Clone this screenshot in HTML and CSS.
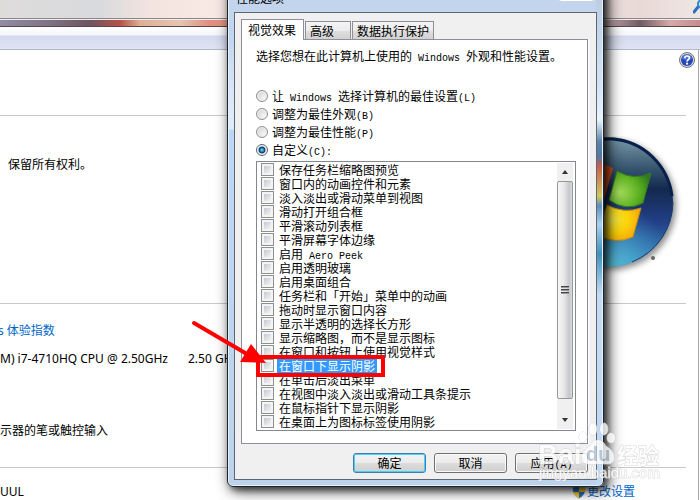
FILE: index.html
```html
<!DOCTYPE html>
<html lang="zh-CN">
<head>
    <meta charset="UTF-8">
    <meta name="viewport" content="width=device-width, initial-scale=1.0">
    <title>性能选项</title>
    <link rel="stylesheet" href="styles.css">
</head>
<body>
    <div class="system">
        <div class="glass">
            <svg class="search" width="8" height="14" viewBox="0 0 8 14">
                <path d="M1 12 L5 7" stroke="#2f6fc0" stroke-width="3" stroke-linecap="round"/>
                <circle cx="9" cy="4" r="4" fill="#d7ecfb" stroke="#2f86d0" stroke-width="2"/>
            </svg>
        </div>
        <div class="strip"></div>
        <div class="toolbar"></div>
        <div class="content">
            <div class="section head">
                <a class="help" href="#" aria-label="帮助">
                    <svg width="16" height="16" viewBox="0 0 16 16">
                        <circle cx="8" cy="8" r="7.5" fill="#d8d8dc" stroke="#77777c"/>
                        <circle cx="8" cy="8" r="6" fill="#2348b8"/>
                        <path d="M3 7a5 5 0 0 1 10 0q-5 2-10 0z" fill="#6d8be0" opacity=".6"/>
                        <path d="M5.8 6.2q0-2.2 2.3-2.2t2.3 2q0 1-1.2 1.8T8.1 9.6" fill="none" stroke="#fff" stroke-width="1.7"/>
                        <circle cx="8.1" cy="11.7" r="1.1" fill="#fff"/>
                    </svg>
                </a>
            </div>
            <div class="section edition">
                <p class="copyright">保留所有权利。</p>
                <svg class="logo" width="144" height="144" viewBox="0 0 144 144">
                    <defs>
                        <linearGradient id="ball" x1="0" y1="0" x2="0" y2="1">
                            <stop offset="0" stop-color="#7b9aa9"/>
                            <stop offset=".25" stop-color="#33536d"/>
                            <stop offset=".4" stop-color="#14284e"/>
                            <stop offset=".65" stop-color="#223f87"/>
                            <stop offset="1" stop-color="#3c8fc0"/>
                        </linearGradient>
                        <radialGradient id="glow" cx=".5" cy="1" r=".5">
                            <stop offset="0" stop-color="#5cc4dc"/>
                            <stop offset="1" stop-color="#3fa0d0" stop-opacity="0"/>
                        </radialGradient>
                        <radialGradient id="green" cx=".25" cy=".6" r=".8">
                            <stop offset="0" stop-color="#a4dc5c"/>
                            <stop offset=".6" stop-color="#5cb020"/>
                            <stop offset="1" stop-color="#2c7a1c"/>
                        </radialGradient>
                        <radialGradient id="yellow" cx=".3" cy=".4" r=".8">
                            <stop offset="0" stop-color="#f8ee4c"/>
                            <stop offset=".5" stop-color="#fbd408"/>
                            <stop offset="1" stop-color="#f49a10"/>
                        </radialGradient>
                        <filter id="soft" x="-20%" y="-20%" width="140%" height="140%">
                            <feGaussianBlur stdDeviation="3"/>
                        </filter>
                    </defs>
                    <circle cx="69" cy="69" r="65" fill="#000" opacity=".45" filter="url(#soft)"/>
                    <circle cx="66" cy="66" r="65" fill="url(#ball)"/>
                    <circle cx="66" cy="66" r="65" fill="url(#glow)"/>
                    <path d="M3 50 A65 65 0 0 1 130 60" fill="none" stroke="#08204a" stroke-width="3"/>
                    <path d="M131 66 A65 65 0 0 1 90 126" fill="none" stroke="#1b3d77" stroke-width="1"/>
                    <path d="M30 36 Q50 22 71 32 L62 64 Q42 54 22 64 Z" fill="#d4501c"/>
                    <path d="M75 35 Q92 45 109 37 L101 67 Q84 76 67 64 Z" fill="url(#green)" stroke="#397c20"/>
                    <path d="M20 68 Q40 58 60 69 L53 100 Q33 90 13 98 Z" fill="#3f88cc"/>
                    <path d="M65 69 Q82 78 99 72 L91 101 Q74 109 55 99 Z" fill="url(#yellow)" stroke="#b88b14"/>
                    <circle cx="111" cy="122" r="2" fill="#666"/>
                </svg>
            </div>
            <div class="section specs">
                <a class="rating" href="#">s 体验指数</a>
                <p class="cpu"><span>M) i7-4710HQ CPU @ 2.50GHz</span><span>2.50 GHz</span></p>
                <p class="pen">示器的笔或触控输入</p>
            </div>
            <div class="section names">
                <p>UUL</p>
                <a class="change" href="#">
                    <svg width="14" height="14" viewBox="0 0 14 14">
                        <path d="M7 0q3 2 7 1.5q0 9-7 12.5q-7-3.5-7-12.5q4 .5 7-1.5z" fill="#c9ced6"/>
                        <path d="M7 1.5v5.5H1.3q-.3-2-.3-4.5q3.500 0 6-1z" fill="#2d6fc4"/>
                        <path d="M7 1.5v5.5h5.700q.3-2 .3-4.500q-3.500 0-6-1z" fill="#f6d02c"/>
                        <path d="M7 7v6q-4.500-2-5.700-6z" fill="#f6d02c"/>
                        <path d="M7 7v6q4.500-2 5.700-6z" fill="#2d6fc4"/>
                    </svg>更改设置</a>
            </div>
        </div>
    </div>

    <div class="dialog">
        <div class="titlebar">
            <span>性能选项</span>
            <button class="close" type="button" aria-label="关闭"></button>
        </div>
        <form class="client">
            <div class="tabs">
                <button class="tab active" type="button">视觉效果</button>
                <button class="tab" type="button">高级</button>
                <button class="tab" type="button">数据执行保护</button>
            </div>
            <div class="pane">
                <p class="intro">选择您想在此计算机上使用的<span class="en"> Windows </span>外观和性能设置。</p>
                <div class="radios">
                    <label><input type="radio" name="fx"><span>让<span class="en"> Windows </span>选择计算机的最佳设置<span class="en">(L)</span></span></label>
                    <label><input type="radio" name="fx"><span>调整为最佳外观<span class="en">(B)</span></span></label>
                    <label><input type="radio" name="fx"><span>调整为最佳性能<span class="en">(P)</span></span></label>
                    <label><input type="radio" name="fx" checked><span>自定义<span class="en">(C):</span></span></label>
                </div>
                <div class="listbox">
                    <div class="options">
                        <label><input type="checkbox"><span>保存任务栏缩略图预览</span></label>
                        <label><input type="checkbox"><span>窗口内的动画控件和元素</span></label>
                        <label><input type="checkbox"><span>淡入淡出或滑动菜单到视图</span></label>
                        <label><input type="checkbox"><span>滑动打开组合框</span></label>
                        <label><input type="checkbox"><span>平滑滚动列表框</span></label>
                        <label><input type="checkbox"><span>平滑屏幕字体边缘</span></label>
                        <label><input type="checkbox"><span>启用<span class="en"> Aero Peek</span></span></label>
                        <label><input type="checkbox"><span>启用透明玻璃</span></label>
                        <label><input type="checkbox"><span>启用桌面组合</span></label>
                        <label><input type="checkbox"><span>任务栏和「开始」菜单中的动画</span></label>
                        <label><input type="checkbox"><span>拖动时显示窗口内容</span></label>
                        <label><input type="checkbox"><span>显示半透明的选择长方形</span></label>
                        <label><input type="checkbox"><span>显示缩略图，而不是显示图标</span></label>
                        <label><input type="checkbox"><span>在窗口和按钮上使用视觉样式</span></label>
                        <label class="selected"><input type="checkbox"><span>在窗口下显示阴影</span></label>
                        <label><input type="checkbox"><span>在单击后淡出菜单</span></label>
                        <label><input type="checkbox"><span>在视图中淡入淡出或滑动工具条提示</span></label>
                        <label><input type="checkbox"><span>在鼠标指针下显示阴影</span></label>
                        <label><input type="checkbox"><span>在桌面上为图标标签使用阴影</span></label>
                    </div>
                    <div class="scrollbar">
                        <div class="arrow up"></div>
                        <div class="thumb"><i></i><i></i><i></i></div>
                        <div class="arrow down"></div>
                    </div>
                </div>
            </div>
            <div class="buttons">
                <button class="btn default" type="button">确定</button>
                <button class="btn" type="button">取消</button>
                <button class="btn" type="button">应用<span class="en">(A)</span></button>
            </div>
        </form>
    </div>

    <svg class="pointer" width="200" height="64" viewBox="0 0 200 64">
        <path d="M4 5 L62 39" stroke="#f00" stroke-width="4" stroke-linecap="round"/>
        <path d="M61 26 L50 44 L76 45 Z" fill="#f00"/>
        <rect x="68" y="39" width="125" height="18" fill="none" stroke="#f00" stroke-width="4"/>
    </svg>

    <svg class="watermark" width="134" height="64" viewBox="0 0 134 64">
        <g class="mark">
            <ellipse cx="52" cy="17" rx="4" ry="5"/>
            <ellipse cx="62" cy="9" rx="4" ry="6"/>
            <ellipse cx="73" cy="9" rx="4" ry="6"/>
            <ellipse cx="80" cy="18" rx="4" ry="5"/>
            <path d="M67 20q5 0 8 6q8 5 8 12q0 6-7 6H58q-7 0-7-6q0-7 8-12q3-6 8-6z"/>
            <text x="7" y="44" font-size="28">Bai</text>
            <text x="86" y="43" font-size="21">经验</text>
            <text class="site" x="8" y="58" font-size="15">jingyan.baidu.com</text>
        </g>
        <text class="du" x="55" y="41" font-size="20">du</text>
    </svg>
</body>
</html>
```
FILE: styles.css
```css
*{
    box-sizing: border-box;
}

body{
    margin: 0;
    height: 100vh;
    overflow: hidden;
    position: relative;
    background-color: #fff;
    color: #000;
    font: 12px/16px "Noto Sans", "Noto Sans CJK SC", sans-serif;
}

p{
    margin: 0;
}

a{
    color: #0066cc;
    text-decoration: none;
}

/* 后面的系统窗口 */
.system{
    height: 100%;
    display: flex;
    flex-direction: column;
}

.glass{
    flex: none;
    height: 19px;
    display: flex;
    justify-content: flex-end;
    border-bottom: 1px solid #8d8587;
    background: linear-gradient(90deg, #dedcdb 0, #d9dade 100px, #f3e4df 150px, #f9eae5 228px, #eadfdd 600px, #e9d9d6 640px, #efe6e4 100%);
}

.search{
    margin-right: -1px;
}

.strip{
    flex: none;
    height: 8px;
    border-top: 1px solid #eee;
    border-bottom: 1px solid #5c4448;
    background: linear-gradient(90deg, #918da6 0, #7d7384 50px, #6e5561 90px, #b65347 120px, #ddb094 140px, #e5c5b2 180px, #df8e80 210px, #e59884 228px, #cdb0b2 604px, #6f5b65 640px, #d6a9a9 670px, #c68d90 100%);
}

.toolbar{
    flex: none;
    height: 23px;
    border-bottom: 1px solid #b4b9c9;
    background: linear-gradient(#fff, #f3f5fb 8px, #d4d9ed 9px, #dfe4f4);
}

.content{
    flex: 1;
    margin-right: 1px;
    border-right: 1px solid #a5a5a5;
}

.section{
    margin-right: 12px;
    border-bottom: 1px solid #c9c9c9;
}

.head{
    height: 66px;
    display: flex;
    justify-content: flex-end;
    padding-top: 2px;
}

.help{
    margin-right: -9px;
}

.edition{
    height: 188px;
    display: flex;
    justify-content: space-between;
}

.copyright{
    padding: 41px 0 0 8px;
}

.logo{
    margin-top: 20px;
}

.specs{
    height: 164px;
    padding-top: 19px;
}

.rating{
    display: block;
    margin-left: -2px;
}

.cpu{
    display: flex;
    gap: 20px;
    padding-top: 12px;
}

.pen{
    padding-top: 56px;
}

.names{
    display: flex;
    justify-content: space-between;
    border: none;
    padding: 16px 51px 0 0;
}

.change{
    display: flex;
    align-items: center;
    gap: 1px;
}

/* 性能选项对话框 */
.dialog{
    position: absolute;
    left: 227px;
    top: -17px;
    width: 377px;
    padding: 0 6px 6px;
    border: 1px solid #20252c;
    border-radius: 6px;
    box-shadow: 3px 3px 6px rgba(0, 0, 0, .5), 4px 3px 15px rgba(0, 0, 0, .8), inset 0 0 0 1px #e3f0fd;
    background:
        linear-gradient(#b9c9df, #d2e3f5 100px, #e9f3fc 136px, #5b82a9 158px, #4f79a4 172px, #c85c50 182px, #d0c85c 212px, #5c8fc0 222px, #a9d0ec 240px, #3d92c0 270px, #c4daf2 310px, #bed8f4) right / 7px 100% no-repeat,
        linear-gradient(#c5d5ec, #bfd5ee 50px, #d9e8f8 110px, #dfedfb 145px, #bcd7f4 146px, #bdd3ec 100%);
    font-family: "Noto Sans CJK SC", sans-serif;
}

.titlebar{
    height: 28px;
    display: flex;
    justify-content: space-between;
    padding-left: 2px;
    line-height: 28px;
}

.close{
    width: 39px;
    height: 17px;
    margin-right: 1px;
    padding: 0;
    border: 1px solid #fff;
    border-radius: 0 0 4px 4px;
    background-color: #c76352;
}

.client{
    border: 1px solid #5f6672;
    background-color: #f0f0f0;
    padding: 6px 8px 6px 6px;
}

.tabs{
    display: flex;
    align-items: flex-end;
    gap: 1px;
}

.tab{
    height: 18px;
    padding: 0 4px;
    border: 1px solid #8e8f98;
    border-bottom: none;
    background: linear-gradient(#f4f4f4, #ececec 50%, #dedede 51%, #d2d2d2);
    font: inherit;
    text-align: left;
    line-height: 18px;
    color: #000;
}

.tab:nth-child(2){
    width: 46px;
}

.tab.active{
    position: relative;
    height: 21px;
    width: 63px;
    padding: 0 6px;
    margin-bottom: -1px;
    background: #fff;
}

.pane{
    border: 1px solid #8e8f98;
    background-color: #fff;
    padding: 8px 11px 12px 14px;
    box-shadow: 2px 0 0 #f9f9f9;
}

.en{
    font-family: "Liberation Mono", monospace;
    font-size: 10px;
    line-height: 1;
    white-space: pre;
}

.radios{
    padding: 23px 0 2px;
}

.radios label{
    display: flex;
    align-items: center;
    height: 18px;
}

input{
    appearance: none;
    flex: none;
    width: 13px;
    height: 13px;
    margin: 0;
}

input[type="radio"]{
    width: 12px;
    height: 12px;
    margin-right: 4px;
    border: 1px solid #8e8f8f;
    border-radius: 50%;
    background: radial-gradient(circle at 7px 7px, #f6f6f6, #c9ccd1);
    box-shadow: inset 0 0 0 1px #f4f4f4;
}

input[type="radio"]:checked{
    border-color: #55677c;
    background: radial-gradient(circle at 5px 5px, #8fe0fa 0, #1a78ac 2px, #0b3558 3px, #eef2f5 4px);
}

.listbox{
    display: flex;
    justify-content: space-between;
    border: 1px solid #828790;
    padding: 1px 2px 1px 4px;
}

.options label{
    display: flex;
    height: 14px;
    line-height: 14px;
}

.options label > span{
    padding: 0 2px;
    margin-left: 3px;
}

.options .selected > span{
    background-color: #3399ff;
    color: #fff;
}

input[type="checkbox"]{
    border: 1px solid #8e8f8f;
    background: linear-gradient(135deg, #c4c9d1, #f4f4f4) 2px 2px / 7px 7px no-repeat #f4f4f4;
    box-shadow: inset 0 0 0 1px #f4f4f4;
}

/* 滚动条 */
.scrollbar{
    width: 16px;
    display: flex;
    flex-direction: column;
    background-color: #f0f0f0;
}

.arrow{
    height: 18px;
    display: flex;
    align-items: center;
    justify-content: center;
}

.arrow::before{
    content: '';
    border: 3px solid transparent;
}

.up::before{
    border-top: none;
    border-bottom: 4px solid #333;
}

.down::before{
    border-bottom: none;
    border-top: 4px solid #333;
}

.down{
    margin-top: auto;
}

.thumb{
    height: 218px;
    display: flex;
    flex-direction: column;
    align-items: center;
    justify-content: center;
    gap: 1px;
    border: 1px solid #979797;
    border-radius: 2px;
    background: linear-gradient(90deg, #f6f6f6, #e6e6e8 45%, #c4c6ca 80%, #dcdcde);
}

.thumb i{
    width: 8px;
    height: 2px;
    border-top: 1px solid #444;
    background-color: #999;
}

.buttons{
    display: flex;
    justify-content: flex-end;
    gap: 8px;
    padding-top: 9px;
}

.btn{
    width: 73px;
    height: 20px;
    padding: 0;
    border: 1px solid #707070;
    border-radius: 3px;
    background: linear-gradient(#f3f3f3, #ebebeb 50%, #dcdcdc 51%, #cfcfcf);
    box-shadow: inset 0 0 0 1px #fafafa;
    font: inherit;
    line-height: 18px;
    color: #000;
}

.btn.default{
    border-color: #3c7fb1;
    box-shadow: inset 0 0 0 1px #48d0f8;
}

/* 标注箭头和水印盖在窗口上面 */
.pointer{
    position: absolute;
    left: 190px;
    top: 318px;
    pointer-events: none;
}

.watermark{
    position: absolute;
    left: 531px;
    top: 420px;
    opacity: .8;
    pointer-events: none;
    font-family: "Liberation Sans", "Noto Sans CJK SC", sans-serif;
    font-weight: bold;
}

.mark{
    fill: #fff;
    stroke: #ccc;
    stroke-width: 1px;
    paint-order: stroke;
}

.site{
    font-weight: normal;
}

.du{
    fill: #b4c0d0;
}
```
